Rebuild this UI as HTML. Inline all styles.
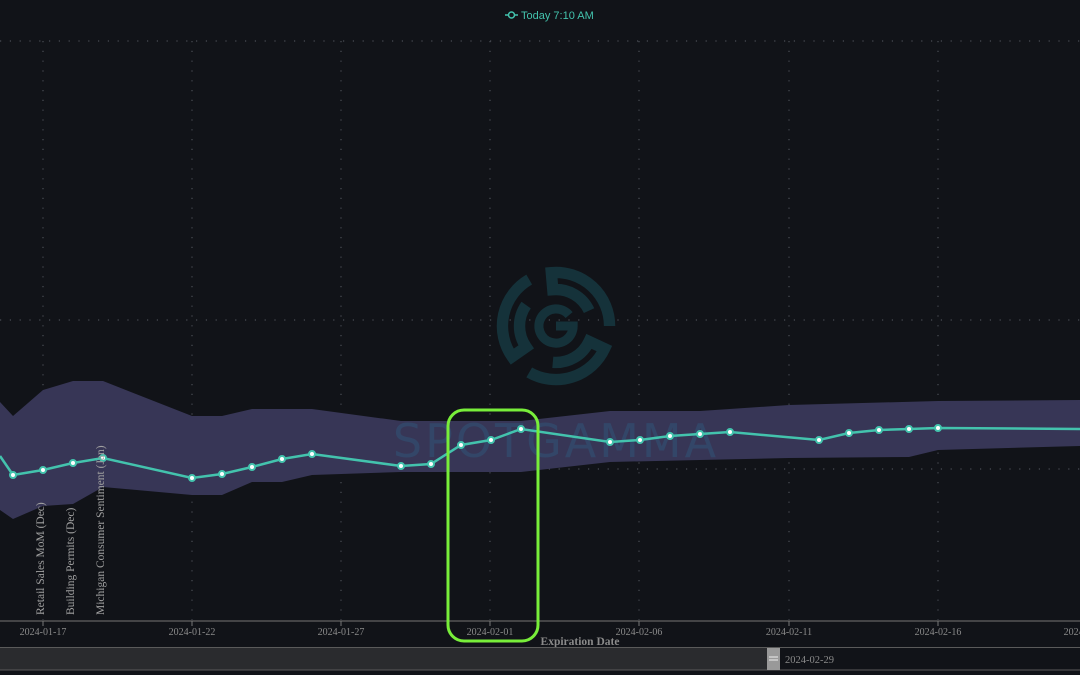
<!DOCTYPE html>
<html><head><meta charset="utf-8"><style>
html,body{margin:0;padding:0;background:#111318;width:1080px;height:675px;overflow:hidden}
svg{display:block}
</style></head><body>
<svg width="1080" height="675" viewBox="0 0 1080 675" xmlns="http://www.w3.org/2000/svg">
<rect width="1080" height="675" fill="#111318"/>
<!-- grid -->
<g stroke="#4a4d55" stroke-width="1.2" stroke-dasharray="1.2 8.6">
<line x1="0" y1="41" x2="1080" y2="41"/>
<line x1="0" y1="320" x2="1080" y2="320"/>
<line x1="0" y1="469" x2="1080" y2="469"/>
<line x1="43" y1="41" x2="43" y2="620"/>
<line x1="192" y1="41" x2="192" y2="620"/>
<line x1="341" y1="41" x2="341" y2="620"/>
<line x1="490" y1="41" x2="490" y2="620"/>
<line x1="639" y1="41" x2="639" y2="620"/>
<line x1="789" y1="41" x2="789" y2="620"/>
<line x1="938" y1="41" x2="938" y2="620"/>
</g>
<!-- logo -->
<g transform="translate(556 326) scale(1.14) translate(-554 -326)">
<g fill="none" stroke="#15323a" stroke-width="10" stroke-linejoin="miter">
<path d="M583 312.5 A32 32 0 0 0 551.2 294.1 L549.9 279.2 A47 47 0 0 1 601 326"/>
<path d="M583 312.5 A32 32 0 0 0 551.2 294.1 L549.9 279.2 A47 47 0 0 1 601 326" transform="rotate(120 554 326)"/>
<path d="M583 312.5 A32 32 0 0 0 551.2 294.1 L549.9 279.2 A47 47 0 0 1 601 326" transform="rotate(240 554 326)"/>
<path d="M565.5 316.4 A15 15 0 1 0 569 326 L554 326" stroke-width="8"/>
</g>
</g>
<!-- band -->
<path d="M0 402 L13 416 L43 390 L73 381 L103 381 L192 416 L222 416 L252 409 L312 409 L401 421 L431 421 L521 421 L610 411 L700 411 L789 405 L938 401 L1080 400 L1080 446 L938 450 L909 457 L789 458 L700 460 L610 462 L521 472 L401 472 L312 475 L282 482 L252 482 L222 495 L192 495 L103 487 L73 504 L43 506 L13 519 L0 510 Z" fill="#373656"/>
<text x="556" y="457" text-anchor="middle" font-family="DejaVu Sans, sans-serif" font-size="46" letter-spacing="3" fill="#33486a" opacity="0.9">SPOTGAMMA</text>
<!-- line -->
<polyline fill="none" stroke="#43c3ad" stroke-width="2.5" points="0,456 13,475 43,470 73,463 103,458 192,478 222,474 252,467 282,459 312,454 401,466 431,464 461,445 491,440 521,429 610,442 640,440 670,436 700,434 730,432 819,440 849,433 879,430 909,429 938,428 1080,429"/>
<g fill="#ffffff" stroke="#43c3ad" stroke-width="2">
<circle cx="13" cy="475" r="3"/><circle cx="43" cy="470" r="3"/><circle cx="73" cy="463" r="3"/><circle cx="103" cy="458" r="3"/>
<circle cx="192" cy="478" r="3"/><circle cx="222" cy="474" r="3"/><circle cx="252" cy="467" r="3"/><circle cx="282" cy="459" r="3"/><circle cx="312" cy="454" r="3"/>
<circle cx="401" cy="466" r="3"/><circle cx="431" cy="464" r="3"/><circle cx="461" cy="445" r="3"/><circle cx="491" cy="440" r="3"/><circle cx="521" cy="429" r="3"/>
<circle cx="610" cy="442" r="3"/><circle cx="640" cy="440" r="3"/><circle cx="670" cy="436" r="3"/><circle cx="700" cy="434" r="3"/><circle cx="730" cy="432" r="3"/>
<circle cx="819" cy="440" r="3"/><circle cx="849" cy="433" r="3"/><circle cx="879" cy="430" r="3"/><circle cx="909" cy="429" r="3"/><circle cx="938" cy="428" r="3"/>
</g>
<!-- event labels -->
<g font-family="Liberation Serif, serif" font-size="11.5" fill="#a0a0a0">
<text transform="translate(44,615) rotate(-90)">Retail Sales MoM (Dec)</text>
<text transform="translate(74,615) rotate(-90)">Building Permits (Dec)</text>
<text transform="translate(104,615) rotate(-90)">Michigan Consumer Sentiment (Jan)</text>
</g>
<!-- axis -->
<line x1="0" y1="621" x2="1080" y2="621" stroke="#555" stroke-width="1.5"/>
<g stroke="#777" stroke-width="1">
<line x1="43" y1="621" x2="43" y2="626"/><line x1="192" y1="621" x2="192" y2="626"/><line x1="341" y1="621" x2="341" y2="626"/><line x1="490" y1="621" x2="490" y2="626"/><line x1="639" y1="621" x2="639" y2="626"/><line x1="789" y1="621" x2="789" y2="626"/><line x1="938" y1="621" x2="938" y2="626"/>
</g>
<g font-family="Liberation Serif, serif" font-size="10" fill="#8a8a8a" text-anchor="middle">
<text x="43" y="635">2024-01-17</text><text x="192" y="635">2024-01-22</text><text x="341" y="635">2024-01-27</text><text x="490" y="635">2024-02-01</text><text x="639" y="635">2024-02-06</text><text x="789" y="635">2024-02-11</text><text x="938" y="635">2024-02-16</text><text x="1087" y="635">2024-02-21</text>
</g>
<text x="580" y="645" text-anchor="middle" font-family="Liberation Serif, serif" font-weight="bold" font-size="11.5" fill="#8a8a8a">Expiration Date</text>
<!-- scrollbar -->
<rect x="0" y="648" width="767" height="22" fill="#2a2b2e"/>
<line x1="0" y1="647.5" x2="1080" y2="647.5" stroke="#5a5a5a"/>
<line x1="0" y1="670" x2="1080" y2="670" stroke="#5a5a5a"/>
<rect x="767" y="648" width="13" height="22" fill="#999"/>
<line x1="769" y1="657" x2="778" y2="657" stroke="#eee"/><line x1="769" y1="660" x2="778" y2="660" stroke="#eee"/>
<text x="785" y="663" font-family="Liberation Serif, serif" font-size="10.5" fill="#8a8a8a">2024-02-29</text>
<!-- legend -->
<line x1="505" y1="15" x2="518" y2="15" stroke="#43c3ad" stroke-width="1.5"/>
<circle cx="511.5" cy="15" r="3" fill="#111318" stroke="#43c3ad" stroke-width="1.5"/>
<text x="521" y="19" font-family="Liberation Sans, sans-serif" font-size="11" fill="#43c3ad">Today 7:10 AM</text>
<!-- highlight -->
<rect x="448" y="410" width="90" height="231" rx="16" fill="none" stroke="#78ee3a" stroke-width="3"/>
</svg>
</body></html>
